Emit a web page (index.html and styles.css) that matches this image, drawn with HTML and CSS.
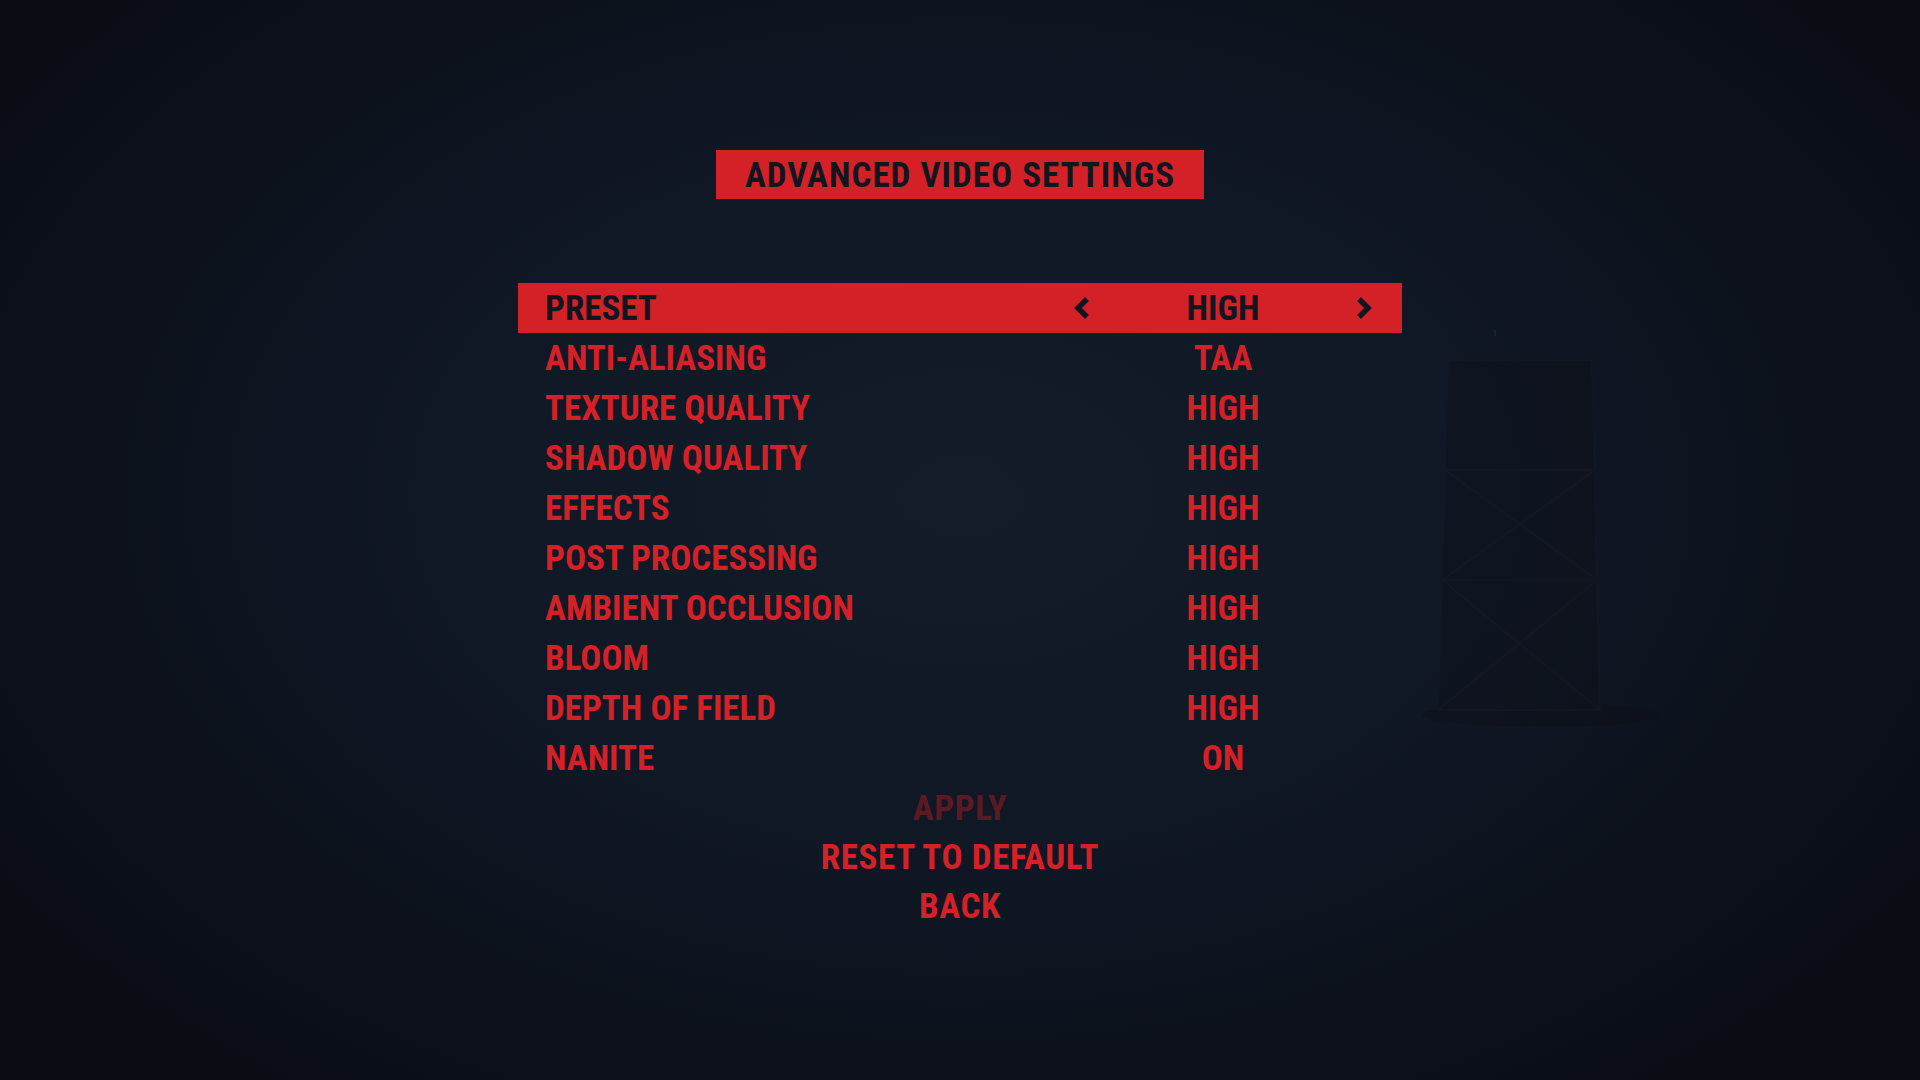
FILE: index.html
```html
<!DOCTYPE html>
<html lang="en">
<head>
<meta charset="utf-8">
<title>Advanced Video Settings</title>
<link rel="stylesheet" href="styles.css">
</head>
<body>
<div class="screen">
  <svg class="tower" viewBox="0 0 240 400" aria-hidden="true">
    <ellipse cx="120" cy="385" rx="118" ry="12" fill="#0e0f17"/>
    <path d="M28 30 L172 30 L180 380 L18 380 Z" fill="#0d1019"/>
    <g fill="none" stroke="#181822" stroke-width="2">
      <path d="M75 2 L75 30"/>
      <path d="M28 30 L172 30 L180 380 L18 380 Z"/>
      <path d="M25 140 L175 140 M22 250 L177 250"/>
      <path d="M25 140 L177 250 M175 140 L22 250"/>
      <path d="M22 250 L180 380 M177 250 L18 380"/>
    </g>
    <rect x="74" y="0" width="2" height="6" fill="#2a3a55"/>
  </svg>

  <main class="menu">
    <h1 class="title">ADVANCED VIDEO SETTINGS</h1>

    <ul class="options">
      <li class="option is-active">
        <span class="label">PRESET</span>
        <span class="value">
          <svg class="arrow arrow-prev" viewBox="0 0 17 22"><path d="M14 2 L5 11 L14 20" /></svg>
          <span class="value-text">HIGH</span>
          <svg class="arrow arrow-next" viewBox="0 0 17 22"><path d="M3 2 L12 11 L3 20" /></svg>
        </span>
      </li>
      <li class="option"><span class="label">ANTI-ALIASING</span><span class="value"><span class="value-text">TAA</span></span></li>
      <li class="option"><span class="label">TEXTURE QUALITY</span><span class="value"><span class="value-text">HIGH</span></span></li>
      <li class="option"><span class="label">SHADOW QUALITY</span><span class="value"><span class="value-text">HIGH</span></span></li>
      <li class="option"><span class="label">EFFECTS</span><span class="value"><span class="value-text">HIGH</span></span></li>
      <li class="option"><span class="label">POST PROCESSING</span><span class="value"><span class="value-text">HIGH</span></span></li>
      <li class="option"><span class="label">AMBIENT OCCLUSION</span><span class="value"><span class="value-text">HIGH</span></span></li>
      <li class="option"><span class="label">BLOOM</span><span class="value"><span class="value-text">HIGH</span></span></li>
      <li class="option"><span class="label">DEPTH OF FIELD</span><span class="value"><span class="value-text">HIGH</span></span></li>
      <li class="option"><span class="label">NANITE</span><span class="value"><span class="value-text">ON</span></span></li>
    </ul>

    <nav class="actions">
      <span class="action is-disabled">APPLY</span>
      <span class="action">RESET TO DEFAULT</span>
      <span class="action">BACK</span>
    </nav>
  </main>
</div>
</body>
</html>
```

FILE: styles.css
```css
* { box-sizing: border-box; }

html, body {
  margin: 0;
  padding: 0;
  width: 1920px;
  height: 1080px;
  overflow: hidden;
}

body {
  background: #0b0f17;
  font-family: "Roboto", "Liberation Sans", sans-serif;
  font-weight: 700;
  font-stretch: 87.5%;
}

.screen {
  position: relative;
  width: 1920px;
  height: 1080px;
  background:
    radial-gradient(ellipse 62% 72% at 50% 46%, #131c29 0%, #101725 45%, #0c111b 75%, #090c13 100%);
  display: flex;
  justify-content: center;
}

/* faint scaffold tower in the backdrop */
.tower {
  position: absolute;
  left: 1420px;
  top: 330px;
  width: 240px;
  height: 400px;
  opacity: 0.35;
}

.menu {
  position: relative;
  width: 884px;
  padding-top: 150px;
  display: flex;
  flex-direction: column;
  align-items: center;
}

.title {
  margin: 0;
  height: 49px;
  width: 488px;
  padding-top: 1px;
  background: #d42027;
  color: #111520;
  font-size: 35px;
  font-weight: 700;
  letter-spacing: 1px;
  line-height: 49px;
  text-align: center;
}

.options {
  list-style: none;
  margin: 84px 0 0;
  padding: 0;
  width: 884px;
}

.option {
  height: 50px;
  display: flex;
  align-items: center;
  padding: 2px 29px 0 27px;
  color: #d42027;
  font-size: 35px;
  line-height: 48px;
}

.option.is-active {
  background: #d42027;
  color: #111520;
}

.label {
  flex: 1;
}

.value {
  width: 300px;
  height: 48px;
  display: flex;
  align-items: center;
  justify-content: center;
  position: relative;
}

.value-text {
  text-align: center;
}

.arrow {
  position: absolute;
  top: 12px;
  width: 17px;
  height: 22px;
  fill: none;
  stroke: #111520;
  stroke-width: 5.5;
  stroke-linejoin: miter;
}
.arrow-prev { left: 0; }
.arrow-next { right: 0; }

.actions {
  display: flex;
  flex-direction: column;
  align-items: center;
  padding-top: 1px;
}

.action {
  height: 49px;
  line-height: 49px;
  font-size: 35px;
  letter-spacing: 0.6px;
  color: #d42027;
}

.action.is-disabled {
  color: #5b1a22;
}
```
